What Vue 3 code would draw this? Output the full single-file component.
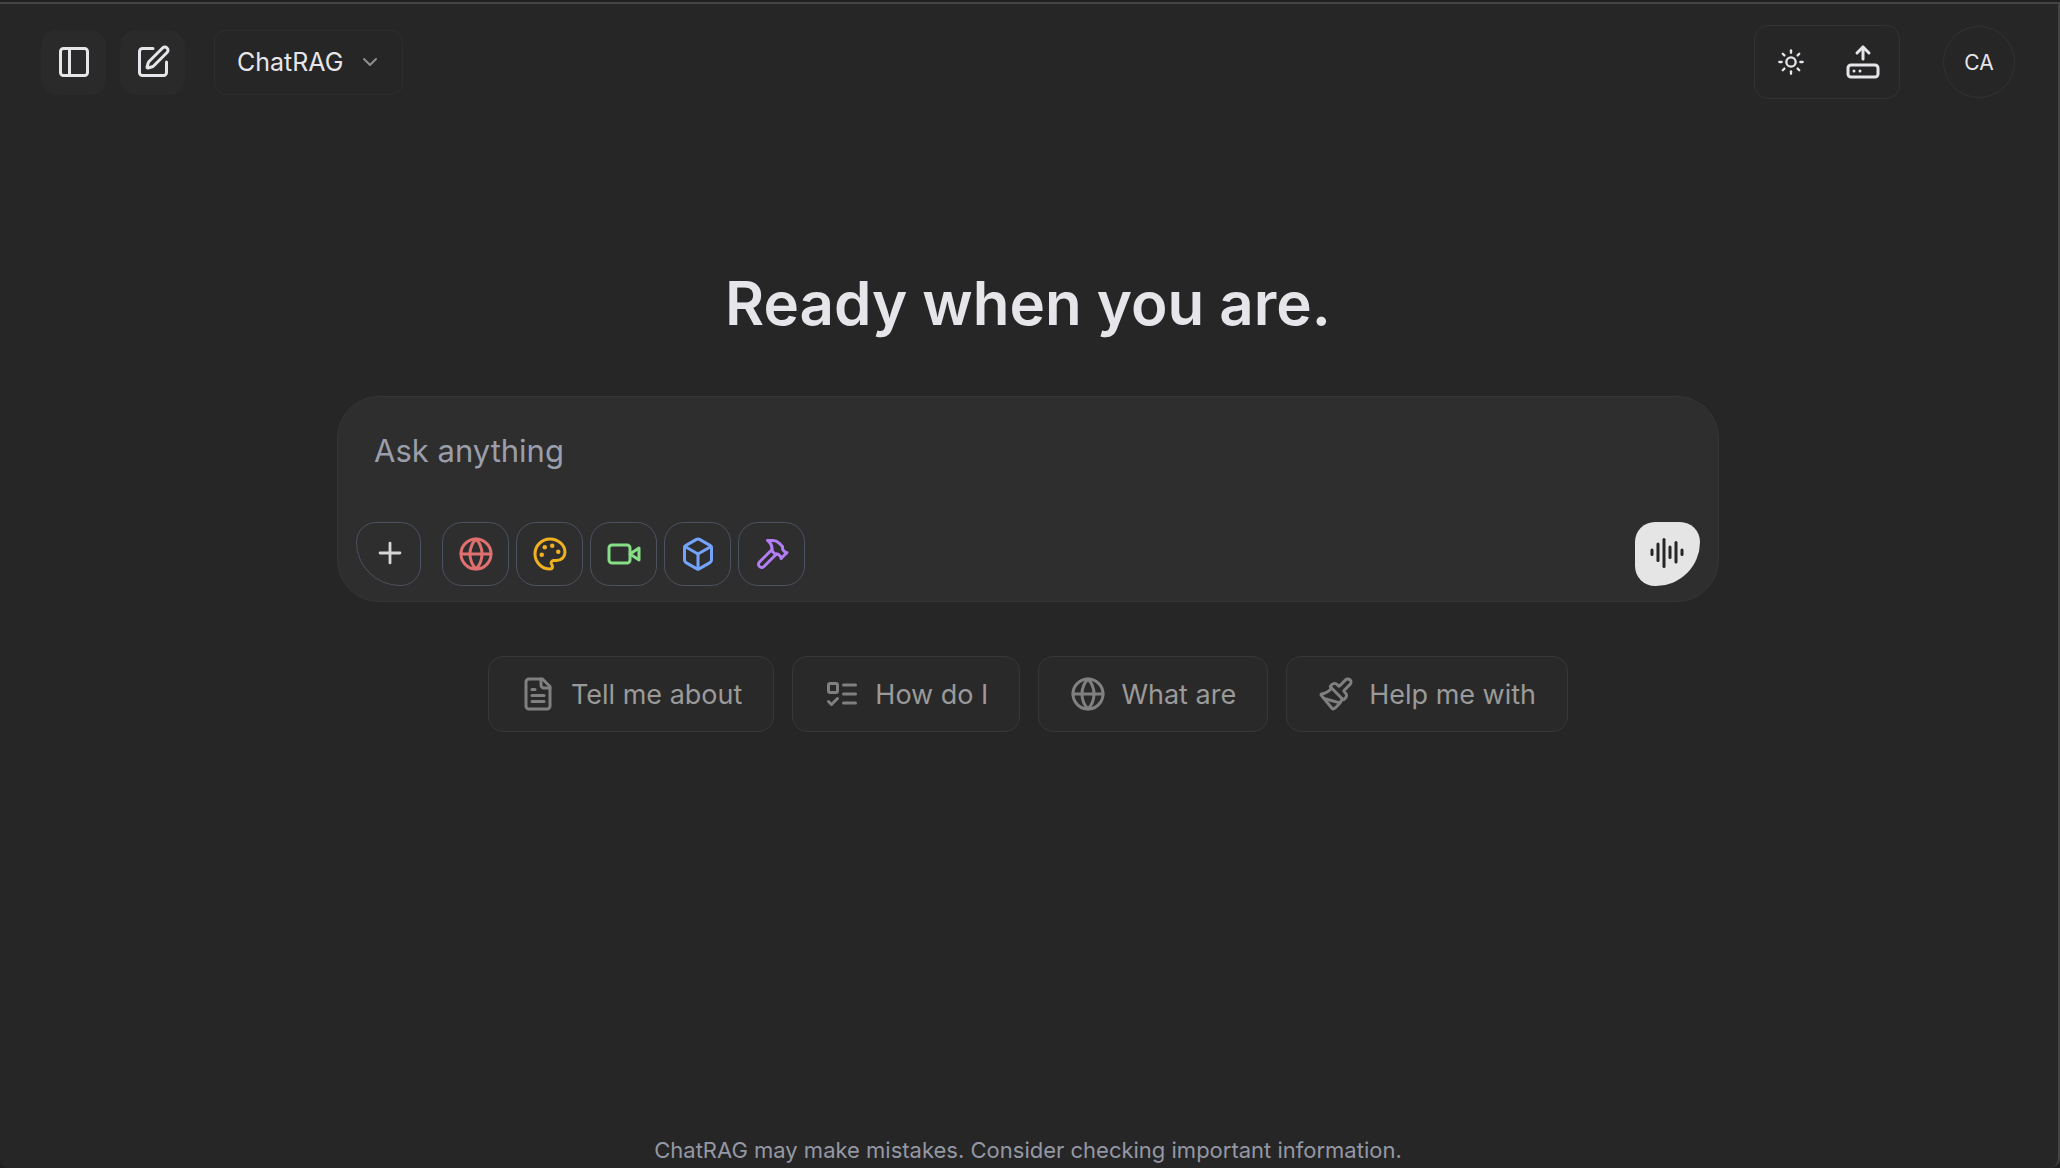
<script setup>
import { h, ref } from 'vue'

const shapes = {
  panel: ['M5 3h14a2 2 0 0 1 2 2v14a2 2 0 0 1-2 2H5a2 2 0 0 1-2-2V5a2 2 0 0 1 2-2z', 'M9 3v18'],
  compose: [
    'M12 3H5a2 2 0 0 0-2 2v14a2 2 0 0 0 2 2h14a2 2 0 0 0 2-2v-7',
    'M18.375 2.625a1 1 0 0 1 3 3l-9.013 9.014a2 2 0 0 1-.853.505l-2.873.84a.5.5 0 0 1-.62-.62l.84-2.873a2 2 0 0 1 .506-.852z'
  ],
  chevron: ['m6 9 6 6 6-6'],
  sun: [
    'M12 8a4 4 0 1 0 0 8 4 4 0 1 0 0-8z', 'M12 2v2', 'M12 20v2', 'm4.93 4.93 1.41 1.41',
    'm17.66 17.66 1.41 1.41', 'M2 12h2', 'M20 12h2', 'm6.34 17.66-1.41 1.41', 'm19.07 4.93-1.41 1.41'
  ],
  upload: [
    'm16 6-4-4-4 4', 'M12 2v8',
    'M4 14h16a2 2 0 0 1 2 2v4a2 2 0 0 1-2 2H4a2 2 0 0 1-2-2v-4a2 2 0 0 1 2-2z',
    'M6 18h.01', 'M10 18h.01'
  ],
  plus: ['M5 12h14', 'M12 5v14'],
  globe: [
    'M12 2a10 10 0 1 0 0 20 10 10 0 1 0 0-20z',
    'M12 2a14.5 14.5 0 0 0 0 20 14.5 14.5 0 0 0 0-20', 'M2 12h20'
  ],
  palette: [
    'M12 2C6.5 2 2 6.5 2 12s4.5 10 10 10c.926 0 1.648-.746 1.648-1.688 0-.437-.18-.835-.437-1.125-.29-.289-.438-.652-.438-1.125a1.64 1.64 0 0 1 1.668-1.668h1.996c3.051 0 5.555-2.503 5.555-5.554C21.965 6.012 17.461 2 12 2z'
  ],
  video: ['m22 8-6 4 6 4V8Z', 'M4 6h10a2 2 0 0 1 2 2v8a2 2 0 0 1-2 2H4a2 2 0 0 1-2-2V8a2 2 0 0 1 2-2z'],
  box: [
    'M21 8a2 2 0 0 0-1-1.73l-7-4a2 2 0 0 0-2 0l-7 4A2 2 0 0 0 3 8v8a2 2 0 0 0 1 1.73l7 4a2 2 0 0 0 2 0l7-4A2 2 0 0 0 21 16Z',
    'm3.3 7 8.7 5 8.7-5', 'M12 22V12'
  ],
  hammer: [
    'm15 12-8.373 8.373a1 1 0 1 1-3-3L12 9', 'm18 15 4-4',
    'm21.5 11.5-1.914-1.914A2 2 0 0 1 19 8.172V7l-2.26-2.26a6 6 0 0 0-4.202-1.756L9 2.96l.92.82A6.18 6.18 0 0 1 12 8.4V10l2 2h1.172a2 2 0 0 1 1.414.586L18.5 14.5'
  ],
  voice: ['M2 10v3', 'M6 6v11', 'M10 3v18', 'M14 8v7', 'M18 5v13', 'M22 10v3'],
  file: [
    'M15 2H6a2 2 0 0 0-2 2v16a2 2 0 0 0 2 2h12a2 2 0 0 0 2-2V7Z',
    'M14 2v4a2 2 0 0 0 2 2h4', 'M10 9H8', 'M16 13H8', 'M16 17H8'
  ],
  list: [
    'M4 5h4a1 1 0 0 1 1 1v4a1 1 0 0 1-1 1H4a1 1 0 0 1-1-1V6a1 1 0 0 1 1-1z',
    'm3 17 2 2 4-4', 'M13 6h8', 'M13 12h8', 'M13 18h8'
  ],
  brush: [
    'm14.622 17.897-10.68-2.913',
    'M18.376 2.622a1 1 0 1 1 3.002 3.002L17.36 9.643a.5.5 0 0 0 0 .707l.944.944a2.41 2.41 0 0 1 0 3.408l-.944.944a.5.5 0 0 1-.707 0L8.354 7.348a.5.5 0 0 1 0-.707l.944-.944a2.41 2.41 0 0 1 3.408 0l.944.944a.5.5 0 0 0 .707 0z',
    'M9 8c-1.804 2.71-3.97 3.46-6.583 3.948a.507.507 0 0 0-.302.819l7.32 8.883a1 1 0 0 0 1.185.204C12.735 20.405 16 16.792 16 15'
  ]
}

// Solid paint wells, drawn as filled circles on top of the outline
const dots = {
  palette: [[13.5, 6.5], [17.5, 10.5], [8.5, 7.5], [6.5, 12.5]]
}

const Icon = ({ name, size = 36 }) =>
  h(
    'svg',
    {
      width: size, height: size, viewBox: '0 0 24 24', fill: 'none', stroke: 'currentColor',
      'stroke-width': 2, 'stroke-linecap': 'round', 'stroke-linejoin': 'round', 'aria-hidden': 'true'
    },
    [
      ...shapes[name].map((d) => h('path', { d })),
      ...(dots[name] || []).map(([cx, cy]) =>
        h('circle', { cx, cy, r: 1.5, fill: 'currentColor', stroke: 'none' })
      )
    ]
  )
Icon.props = ['name', 'size']

const tools = [
  { name: 'globe', label: 'Web search' },
  { name: 'palette', label: 'Create image' },
  { name: 'video', label: 'Create video' },
  { name: 'box', label: 'Create 3D model' },
  { name: 'hammer', label: 'Tools' }
]

const suggestions = [
  { icon: 'file', text: 'Tell me about' },
  { icon: 'list', text: 'How do I' },
  { icon: 'globe', text: 'What are' },
  { icon: 'brush', text: 'Help me with' }
]

const prompt = ref('')
</script>

<template>
  <div class="window">
    <div class="app">
      <header class="topbar">
        <nav class="left">
          <button class="square" type="button" aria-label="Toggle sidebar"><Icon name="panel" /></button>
          <button class="square" type="button" aria-label="New chat"><Icon name="compose" /></button>
          <button class="model" type="button">ChatRAG <Icon class="chevron" name="chevron" :size="24" /></button>
        </nav>
        <div class="right">
          <div class="group">
            <button type="button" aria-label="Toggle theme"><Icon name="sun" :size="28" /></button>
            <button type="button" aria-label="Upload documents"><Icon name="upload" /></button>
          </div>
          <button class="avatar" type="button">CA</button>
        </div>
      </header>

      <main>
        <h1>Ready when you are.</h1>
        <form class="composer" @submit.prevent>
          <textarea v-model="prompt" rows="1" placeholder="Ask anything" aria-label="Ask anything"></textarea>
          <div class="actions">
            <button class="action add" type="button" aria-label="Add attachment"><Icon name="plus" :size="34" /></button>
            <div class="tools">
              <button
                v-for="tool in tools"
                :key="tool.name"
                class="action tool"
                :class="tool.name"
                type="button"
                :aria-label="tool.label"
              >
                <Icon :name="tool.name" />
              </button>
            </div>
            <button class="action talk" type="button" aria-label="Voice mode"><Icon name="voice" /></button>
          </div>
        </form>
        <div class="suggestions">
          <button v-for="item in suggestions" :key="item.text" type="button">
            <Icon :name="item.icon" />{{ item.text }}
          </button>
        </div>
      </main>

      <footer>ChatRAG may make mistakes. Consider checking important information.</footer>
    </div>
  </div>
</template>

<style>
body {
  background: #1f1f1f;
}
</style>

<style scoped>
.window,
.window * {
  box-sizing: border-box;
}
.window {
  min-height: 100vh;
  padding-top: 2px;
  display: flex;
  font-family: Inter, "Liberation Sans", sans-serif;
  color: #e5e5ea;
}
.app {
  flex: 1;
  display: flex;
  flex-direction: column;
  background: #262626;
  border-top: 2px solid #444444;
  border-right: 2px solid #444444;
  border-radius: 0 0 10px 8px;
}
button {
  display: flex;
  align-items: center;
  justify-content: center;
  margin: 0;
  padding: 0;
  border: 0;
  background: none;
  color: inherit;
  font: inherit;
  cursor: pointer;
}
svg {
  display: block;
  flex: none;
}
.topbar {
  display: flex;
  align-items: center;
  justify-content: space-between;
  padding: 21px 43px 0 41px;
}
.left,
.right,
.group {
  display: flex;
  align-items: center;
}
.left {
  gap: 14px;
}
.square {
  width: 65px;
  height: 65px;
  border-radius: 16px;
  background: #2a2a2a;
}
.model {
  height: 65px;
  margin-left: 15px;
  padding: 0 20px 0 22px;
  gap: 15px;
  border: 1px solid #2e2e2e;
  border-radius: 12px;
  font-size: 25px;
}
.chevron {
  color: #8e8e8e;
}
.right {
  gap: 43px;
}
.group {
  height: 74px;
  border: 1px solid #323232;
  border-radius: 14px;
}
.group button {
  width: 72px;
  height: 72px;
}
.avatar {
  width: 72px;
  height: 72px;
  border: 1px solid #323232;
  border-radius: 50%;
  font-size: 21px;
}
main {
  flex: 1;
  display: flex;
  flex-direction: column;
  align-items: center;
  padding: 164px 26px 24px 24px;
}
h1 {
  margin: 0 0 53px;
  font-size: 60px;
  line-height: 80px;
  font-weight: 600;
  text-align: center;
}
.composer {
  width: 100%;
  max-width: 1382px;
  padding: 18px 18px 15px;
  background: #2e2e2e;
  border: 1px solid #363638;
  border-radius: 42px;
}
textarea {
  display: block;
  width: 100%;
  height: 107px;
  padding: 18px;
  border: 0;
  outline: 0;
  resize: none;
  background: none;
  color: #e5e5ea;
  font: inherit;
  font-size: 31px;
  line-height: 36px;
}
textarea::placeholder {
  color: #9a9eaa;
  opacity: 1;
}
.actions {
  display: flex;
  align-items: center;
}
.action {
  width: 65px;
  height: 64px;
  border: 1px solid #4b5260;
  border-radius: 20px;
}
.add {
  padding: 0 0 3px 2px;
  border-radius: 20px 20px 20px 44px;
  color: #d6d6d6;
}
.tools {
  display: flex;
  gap: 7px;
  margin-left: 21px;
}
.tool {
  width: 67px;
}
.globe {
  color: #e07070;
}
.palette {
  color: #f0b020;
}
.video {
  color: #86df86;
}
.box {
  color: #74a3fa;
}
.hammer {
  color: #b27df5;
}
.talk {
  margin-left: auto;
  padding: 0 2px 3px 0;
  border: 0;
  border-radius: 20px 20px 44px 20px;
  background: #e5e5e5;
  color: #262626;
}
.suggestions {
  display: flex;
  flex-wrap: wrap;
  justify-content: center;
  gap: 18px;
  margin-top: 54px;
}
.suggestions button {
  height: 76px;
  padding: 0 31px;
  gap: 15px;
  border: 1px solid #383838;
  border-radius: 15px;
  background: #292929;
  color: #9a9a9a;
  font-size: 27px;
}
.suggestions svg {
  color: #808080;
}
footer {
  padding: 0 2px 4px 0;
  color: #9498a4;
  font-size: 22px;
  line-height: 28px;
  text-align: center;
}
</style>
